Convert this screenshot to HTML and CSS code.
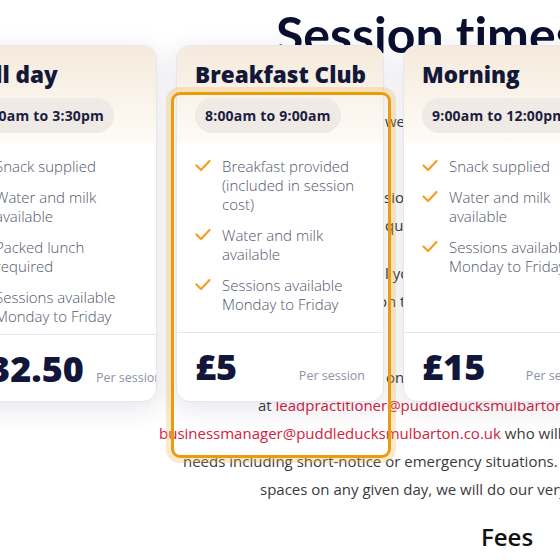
FILE: index.html
```html
<!DOCTYPE html>
<html lang="en">
<head>
<meta charset="utf-8">
<title>Session times</title>
<link rel="stylesheet" href="styles.css">
</head>
<body>
<main class="page">
  <h2 class="title">Session times</h2>
  <div class="copy">
    <p class="ln mt-first x385">we offer term-time sessions</p>
    <p class="ln mt48 x384">sions run each weekday</p>
    <p class="ln x385">quired for all children</p>
    <p class="ln mt20 x385">l you need them</p>
    <p class="ln x378">on the day</p>
    <p class="ln mt48 x386">on</p>
    <p class="ln x258">at <a href="#">leadpractitioner@puddleducksmulbarton.co.uk</a> or</p>
    <p class="ln x159"><a href="#">businessmanager@puddleducksmulbarton.co.uk</a> who will</p>
    <p class="ln x183">needs including short-notice or emergency situations. If</p>
    <p class="ln x260">spaces on any given day, we will do our very best</p>
  </div>
  <h3 class="fees">Fees</h3>
</main>

<section class="track">
  <article class="card">
    <header class="card-head">
      <h4 class="card-title">Full day</h4>
      <span class="pill">8:00am to 3:30pm</span>
    </header>
    <ul class="list">
      <li class="item"><svg class="tick" viewBox="0 0 16 16"><polyline points="1.5,7.5 6,12 14.5,3"/></svg><span>Snack supplied</span></li>
      <li class="item"><svg class="tick" viewBox="0 0 16 16"><polyline points="1.5,7.5 6,12 14.5,3"/></svg><span>Water and milk available</span></li>
      <li class="item"><svg class="tick" viewBox="0 0 16 16"><polyline points="1.5,7.5 6,12 14.5,3"/></svg><span>Packed lunch required</span></li>
      <li class="item"><svg class="tick" viewBox="0 0 16 16"><polyline points="1.5,7.5 6,12 14.5,3"/></svg><span>Sessions available Monday to Friday</span></li>
    </ul>
    <footer class="card-foot">
      <span class="price">£32.50</span>
      <span class="per">Per session</span>
    </footer>
  </article>

  <article class="card">
    <header class="card-head">
      <h4 class="card-title">Breakfast Club</h4>
      <span class="pill">8:00am to 9:00am</span>
    </header>
    <ul class="list">
      <li class="item"><svg class="tick" viewBox="0 0 16 16"><polyline points="1.5,7.5 6,12 14.5,3"/></svg><span>Breakfast provided (included in session cost)</span></li>
      <li class="item"><svg class="tick" viewBox="0 0 16 16"><polyline points="1.5,7.5 6,12 14.5,3"/></svg><span>Water and milk available</span></li>
      <li class="item"><svg class="tick" viewBox="0 0 16 16"><polyline points="1.5,7.5 6,12 14.5,3"/></svg><span>Sessions available Monday to Friday</span></li>
    </ul>
    <footer class="card-foot">
      <span class="price">£5</span>
      <span class="per">Per session</span>
    </footer>
  </article>

  <article class="card">
    <header class="card-head">
      <h4 class="card-title">Morning</h4>
      <span class="pill">9:00am to 12:00pm</span>
    </header>
    <ul class="list">
      <li class="item"><svg class="tick" viewBox="0 0 16 16"><polyline points="1.5,7.5 6,12 14.5,3"/></svg><span>Snack supplied</span></li>
      <li class="item"><svg class="tick" viewBox="0 0 16 16"><polyline points="1.5,7.5 6,12 14.5,3"/></svg><span>Water and milk available</span></li>
      <li class="item"><svg class="tick" viewBox="0 0 16 16"><polyline points="1.5,7.5 6,12 14.5,3"/></svg><span>Sessions available Monday to Friday</span></li>
    </ul>
    <footer class="card-foot">
      <span class="price">£15</span>
      <span class="per">Per session</span>
    </footer>
  </article>
</section>

<div class="focus-ring"></div>
</body>
</html>
```

FILE: styles.css
```css
html, body {
  margin: 0;
  padding: 0;
  width: 560px;
  height: 560px;
  overflow: hidden;
}

body {
  position: relative;
  background: #ffffff;
  font-family: "Open Sans", "Liberation Sans", sans-serif;
  color: #3a3a3a;
}

.page {
  display: flex;
  flex-direction: column;
}

.title {
  margin: 8px 0 0;
  padding-left: 276px;
  font-family: "Lato", "Open Sans", sans-serif;
  font-size: 50px;
  font-weight: 700;
  line-height: 52px;
  color: #0b1030;
  white-space: nowrap;
  font-variant-ligatures: none;
}

.copy {
  display: flex;
  flex-direction: column;
}

.ln {
  margin: 0;
  height: 28px;
  line-height: 28px;
  font-size: 15px;
  white-space: nowrap;
  color: #3a3a3a;
}

.ln a {
  color: #d4213d;
  text-decoration: none;
}

.mt-first { margin-top: 47px; }
.mt48 { margin-top: 48px; }
.mt20 { margin-top: 20px; }

.x385 { padding-left: 385px; }
.x384 { padding-left: 384px; }
.x386 { padding-left: 386px; }
.x378 { padding-left: 378px; }
.x258 { padding-left: 258px; }
.x159 { padding-left: 159px; }
.x183 { padding-left: 183px; }
.x260 { padding-left: 260px; }

.fees {
  margin: 19px 0 0;
  padding-left: 481px;
  font-size: 24px;
  font-weight: 600;
  line-height: 30px;
  color: #111111;
}

/* cards overlay */
.track {
  position: absolute;
  top: 45px;
  left: -51px;
  display: flex;
  gap: 19px;
}

.card {
  flex: none;
  width: 208px;
  height: 357px;
  box-sizing: border-box;
  display: flex;
  flex-direction: column;
  background: #ffffff;
  border: 1px solid #e6e6ed;
  border-radius: 14px;
  box-shadow: 0 6px 24px 2px rgba(30, 32, 80, 0.1);
  overflow: hidden;
}

.card-head {
  padding: 15px 18px 10px;
  background: linear-gradient(180deg, #f5eadc 0%, #fefbf6 100%);
  display: flex;
  flex-direction: column;
  align-items: flex-start;
}

.card-title {
  margin: 0 0 9px;
  font-size: 22.5px;
  font-weight: 800;
  line-height: 28px;
  color: #141838;
  white-space: nowrap;
}

.pill {
  display: inline-flex;
  align-items: center;
  height: 35px;
  padding: 0 10px;
  border-radius: 18px;
  background: #efeae5;
  font-size: 14px;
  font-weight: 700;
  letter-spacing: 0.2px;
  color: #1c2040;
  white-space: nowrap;
}

.list {
  flex: 1;
  margin: 0;
  padding: 14px 18px 8px;
  list-style: none;
  display: flex;
  flex-direction: column;
  gap: 12px;
}

.item {
  display: flex;
  gap: 11px;
  font-size: 15px;
  font-weight: 300;
  line-height: 19px;
  color: #52566b;
}

.tick {
  flex: none;
  width: 16px;
  height: 16px;
  margin-top: 1px;
  fill: none;
  stroke: #f5a020;
  stroke-width: 2.2;
  stroke-linecap: round;
  stroke-linejoin: round;
}

.card-foot {
  border-top: 1px solid #e7e7ee;
  padding: 16px 18px 16px;
  display: flex;
  align-items: baseline;
  justify-content: space-between;
  gap: 12px;
}

.price {
  flex: none;
  font-size: 36px;
  font-weight: 800;
  line-height: 36px;
  color: #11163a;
}

.per {
  flex: none;
  font-size: 12.5px;
  font-weight: 400;
  color: #8d92a5;
  white-space: nowrap;
}

.focus-ring {
  position: absolute;
  left: 171px;
  top: 92px;
  width: 220px;
  height: 366px;
  box-sizing: border-box;
  border: 3.5px solid #e99d0d;
  border-radius: 9px;
  box-shadow: 0 0 0 5px rgba(236, 178, 70, 0.28);
  pointer-events: none;
}
```
